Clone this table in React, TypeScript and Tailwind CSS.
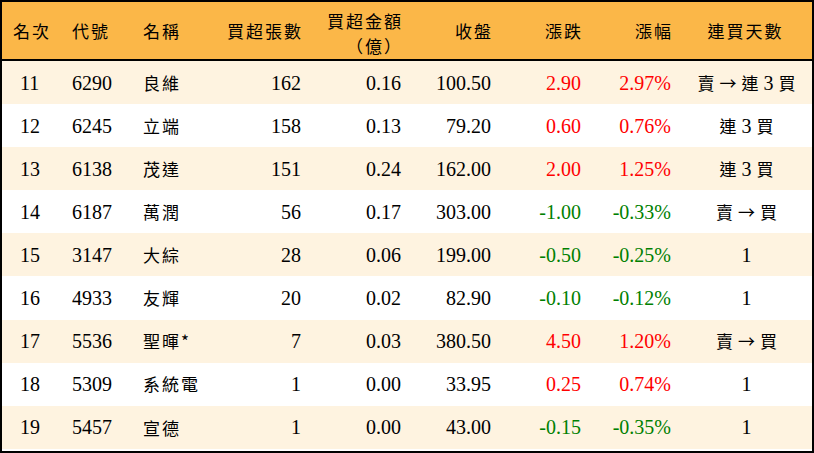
import React from 'react';

interface Row {
  rank: number;
  code: string;
  name: string;
  lots: string;
  amount: string;
  close: string;
  change: string;
  pct: string;
  streak: string;
}

const ROWS: Row[] = [
  { rank: 11, code: '6290', name: '良維', lots: '162', amount: '0.16', close: '100.50', change: '2.90', pct: '2.97%', streak: '賣 → 連 3 買' },
  { rank: 12, code: '6245', name: '立端', lots: '158', amount: '0.13', close: '79.20', change: '0.60', pct: '0.76%', streak: '連 3 買' },
  { rank: 13, code: '6138', name: '茂達', lots: '151', amount: '0.24', close: '162.00', change: '2.00', pct: '1.25%', streak: '連 3 買' },
  { rank: 14, code: '6187', name: '萬潤', lots: '56', amount: '0.17', close: '303.00', change: '-1.00', pct: '-0.33%', streak: '賣 → 買' },
  { rank: 15, code: '3147', name: '大綜', lots: '28', amount: '0.06', close: '199.00', change: '-0.50', pct: '-0.25%', streak: '1' },
  { rank: 16, code: '4933', name: '友輝', lots: '20', amount: '0.02', close: '82.90', change: '-0.10', pct: '-0.12%', streak: '1' },
  { rank: 17, code: '5536', name: '聖暉*', lots: '7', amount: '0.03', close: '380.50', change: '4.50', pct: '1.20%', streak: '賣 → 買' },
  { rank: 18, code: '5309', name: '系統電', lots: '1', amount: '0.00', close: '33.95', change: '0.25', pct: '0.74%', streak: '1' },
  { rank: 19, code: '5457', name: '宣德', lots: '1', amount: '0.00', close: '43.00', change: '-0.15', pct: '-0.35%', streak: '1' },
];

const GRID = 'grid grid-cols-[58px_75px_80px_96px_100px_90px_90px_90px_131px]';
const SERIF = "font-['Liberation_Serif','Noto_Sans_CJK_TC',serif]";
const CJK = "font-['Noto_Sans_CJK_TC',sans-serif]";

export default function App() {
  return (
    <div className="w-[814px] h-[453px] border-2 border-black bg-white text-black overflow-hidden">
      {/* Header */}
      <div className={`${GRID} h-[59px] bg-[#fbb748] border-b-2 border-black items-center text-[17px] ${CJK} tracking-[2px]`}>
        <div className="text-center pl-[2px]">名次</div>
        <div className="pl-[12px]">代號</div>
        <div className="pl-[8px]">名稱</div>
        <div className="text-right pr-[8px]">買超張數</div>
        <div className="text-right pr-[8px] leading-[25px] pt-[4px]">
          <div>買超金額</div>
          <div>（億）</div>
        </div>
        <div className="text-right pr-[8px]">收盤</div>
        <div className="text-right pr-[8px]">漲跌</div>
        <div className="text-right pr-[8px]">漲幅</div>
        <div className="text-center pr-[2px]">連買天數</div>
      </div>

      {/* Rows */}
      {ROWS.map((r, i) => {
        const color = r.change.startsWith('-') ? 'text-[#008000]' : 'text-[#ff0000]';
        return (
          <div
            key={r.rank}
            className={`${GRID} h-[43.1px] items-center text-[20px] ${SERIF} ${i % 2 === 0 ? 'bg-[#fef3e0]' : 'bg-white'}`}
          >
            <div className="pl-[18px]">{r.rank}</div>
            <div className="pl-[12px]">{r.code}</div>
            <div className={`pl-[8px] text-[17px] tracking-[2px] ${CJK}`}>{r.name}</div>
            <div className="text-right pr-[10px]">{r.lots}</div>
            <div className="text-right pr-[10px]">{r.amount}</div>
            <div className="text-right pr-[10px]">{r.close}</div>
            <div className={`text-right pr-[10px] ${color}`}>{r.change}</div>
            <div className={`text-right pr-[10px] ${color}`}>{r.pct}</div>
            {r.streak === '1' ? (
              <div className="text-center">1</div>
            ) : (
              <div className={`flex justify-center items-center gap-[5px] text-[17px] ${CJK}`}>
                {r.streak.split(' ').map((t, k) => (
                  <span key={k} className={t === '3' ? `${SERIF} text-[20px]` : ''}>
                    {t}
                  </span>
                ))}
              </div>
            )}
          </div>
        );
      })}
    </div>
  );
}
